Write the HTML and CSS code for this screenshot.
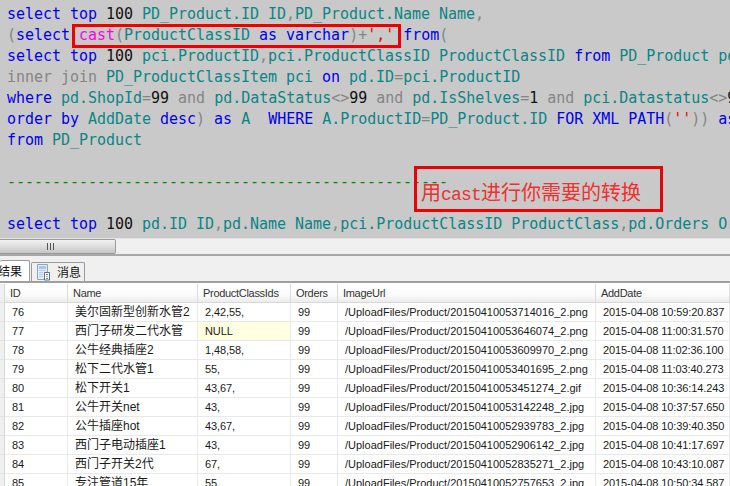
FILE: index.html
```html
<!DOCTYPE html>
<html lang="zh">
<head>
<meta charset="utf-8">
<title>SQL</title>
<link rel="stylesheet" href="styles.css">
</head>
<body>
<div class="app">
  <pre class="editor"><span class="k">select top</span> <span class="n">100</span> <span class="i">PD_Product.ID ID</span><span class="g">,</span><span class="i">PD_Product.Name Name</span><span class="g">,</span>
<span class="g">(</span><span class="k">select</span> <span class="m">cast</span><span class="g">(</span><span class="i">ProductClassID</span> <span class="k">as varchar</span><span class="g">)+</span><span class="s">','</span> <span class="k">from</span><span class="g">(</span>
<span class="k">select top</span> <span class="n">100</span> <span class="i">pci.ProductID</span><span class="g">,</span><span class="i">pci.ProductClassID ProductClassID</span> <span class="k">from</span> <span class="i">PD_Product pd</span>
<span class="g">inner join</span> <span class="i">PD_ProductClassItem pci</span> <span class="k">on</span> <span class="i">pd.ID</span><span class="g">=</span><span class="i">pci.ProductID</span>
<span class="k">where</span> <span class="i">pd.ShopId</span><span class="g">=</span><span class="n">99</span> <span class="g">and</span> <span class="i">pd.DataStatus</span><span class="g">&lt;&gt;</span><span class="n">99</span> <span class="g">and</span> <span class="i">pd.IsShelves</span><span class="g">=</span><span class="n">1</span> <span class="g">and</span> <span class="i">pci.Datastatus</span><span class="g">&lt;&gt;</span><span class="n">99</span>
<span class="k">order by</span> <span class="i">AddDate</span> <span class="k">desc</span><span class="g">)</span> <span class="k">as</span> <span class="i">A</span>  <span class="k">WHERE</span> <span class="i">A.ProductID</span><span class="g">=</span><span class="i">PD_Product.ID</span> <span class="k">FOR XML PATH</span><span class="g">(</span><span class="s">''</span><span class="g">))</span> <span class="k">as</span>
<span class="k">from</span> <span class="i">PD_Product</span>

<span class="c">-------------------------------------------------</span>

<span class="k">select top</span> <span class="n">100</span> <span class="i">pd.ID ID</span><span class="g">,</span><span class="i">pd.Name Name</span><span class="g">,</span><span class="i">pci.ProductClassID ProductClass</span><span class="g">,</span><span class="i">pd.Orders Or</span></pre>
  <div class="mark mark-cast"></div>
  <div class="mark mark-note">用<span class="latin">cast</span>进行你需要的转换</div>

  <div class="hscroll">
    <div class="thumb"><span class="grip"></span><span class="grip"></span><span class="grip"></span></div>
  </div>

  <div class="tabs">
    <div class="tab active"><span class="tab-text cut">结果</span></div>
    <div class="tab">
      <svg class="tab-icon" width="15" height="17" viewBox="0 0 15 17">
        <path d="M1.5.5h10v15h-10z" fill="#e4eefa" stroke="#8fa3bd"/>
        <path d="M3 2h7v3H3z" fill="#a9c6ea"/>
        <path d="M3 6h7v1H3zM3 8h4v1H3zM3 10h4v1H3zM3 12h4v1H3z" fill="#b9cde6"/>
        <path d="M8.5 8.500h5v7.500h-5z" fill="#fff" stroke="#54709c"/>
        <path d="M10 10h2v1h-2z" fill="#d9534a"/>
        <path d="M10 12h2v1h-2z" fill="#e2a93b"/>
        <path d="M10 14h2v1h-2z" fill="#4fa85a"/>
      </svg>
      <span class="tab-text">消息</span>
    </div>
  </div>

  <div class="grid">
    <div class="row head"><div class="hdr"></div><div class="cell">ID</div><div class="cell">Name</div><div class="cell">ProductClassIds</div><div class="cell">Orders</div><div class="cell">ImageUrl</div><div class="cell">AddDate</div></div>
    <div class="row"><div class="hdr"></div><div class="cell">76</div><div class="cell">美尔固新型创新水管2</div><div class="cell">2,42,55,</div><div class="cell">99</div><div class="cell">/UploadFiles/Product/20150410053714016_2.png</div><div class="cell">2015-04-08 10:59:20.837</div></div>
    <div class="row"><div class="hdr"></div><div class="cell">77</div><div class="cell">西门子研发二代水管</div><div class="cell null">NULL</div><div class="cell">99</div><div class="cell">/UploadFiles/Product/20150410053646074_2.png</div><div class="cell">2015-04-08 11:00:31.570</div></div>
    <div class="row"><div class="hdr"></div><div class="cell">78</div><div class="cell">公牛经典插座2</div><div class="cell">1,48,58,</div><div class="cell">99</div><div class="cell">/UploadFiles/Product/20150410053609970_2.png</div><div class="cell">2015-04-08 11:02:36.100</div></div>
    <div class="row"><div class="hdr"></div><div class="cell">79</div><div class="cell">松下二代水管1</div><div class="cell">55,</div><div class="cell">99</div><div class="cell">/UploadFiles/Product/20150410053401695_2.png</div><div class="cell">2015-04-08 11:03:40.273</div></div>
    <div class="row"><div class="hdr"></div><div class="cell">80</div><div class="cell">松下开关1</div><div class="cell">43,67,</div><div class="cell">99</div><div class="cell">/UploadFiles/Product/20150410053451274_2.gif</div><div class="cell">2015-04-08 10:36:14.243</div></div>
    <div class="row"><div class="hdr"></div><div class="cell">81</div><div class="cell">公牛开关net</div><div class="cell">43,</div><div class="cell">99</div><div class="cell">/UploadFiles/Product/20150410053142248_2.jpg</div><div class="cell">2015-04-08 10:37:57.650</div></div>
    <div class="row"><div class="hdr"></div><div class="cell">82</div><div class="cell">公牛插座hot</div><div class="cell">43,67,</div><div class="cell">99</div><div class="cell">/UploadFiles/Product/20150410052939783_2.jpg</div><div class="cell">2015-04-08 10:39:40.350</div></div>
    <div class="row"><div class="hdr"></div><div class="cell">83</div><div class="cell">西门子电动插座1</div><div class="cell">43,</div><div class="cell">99</div><div class="cell">/UploadFiles/Product/20150410052906142_2.jpg</div><div class="cell">2015-04-08 10:41:17.697</div></div>
    <div class="row"><div class="hdr"></div><div class="cell">84</div><div class="cell">西门子开关2代</div><div class="cell">67,</div><div class="cell">99</div><div class="cell">/UploadFiles/Product/20150410052835271_2.jpg</div><div class="cell">2015-04-08 10:43:10.087</div></div>
    <div class="row"><div class="hdr"></div><div class="cell">85</div><div class="cell">专注管道15年</div><div class="cell">55,</div><div class="cell">99</div><div class="cell">/UploadFiles/Product/20150410052757653_2.jpg</div><div class="cell">2015-04-08 10:50:34.587</div></div>
  </div>
</div>
</body>
</html>
```

FILE: styles.css
```css
* { box-sizing: border-box; }
html, body { margin: 0; padding: 0; }
body { width: 730px; height: 486px; overflow: hidden; background: #f0f0f0; }
.app { position: relative; width: 730px; height: 486px; overflow: hidden; display: flex; flex-direction: column; }

.editor {
  margin: 0; flex: none; height: 239px; padding: 4px 0 0 7px; overflow: hidden;
  background: #c9c9c9; border-bottom: 1px solid #e4e4e4;
  font-family: "DejaVu Sans Mono", monospace; font-size: 15px; letter-spacing: -0.03px; line-height: 21px; white-space: pre;
}
.k { color: #0000f0; }
.i { color: #0a8585; }
.g { color: #858585; }
.n { color: #111; }
.m { color: #ff00e6; }
.s { color: #f00000; }
.c { color: #008a00; }

.mark { position: absolute; border: 3px solid #f00000; }
.mark-cast { left: 72px; top: 24px; width: 329px; height: 24px; }
.mark-note {
  left: 414px; top: 166px; width: 249px; height: 46px; padding: 0 0 0 4px; color: #f03030;
  font-family: "Noto Sans CJK SC", sans-serif; font-size: 20px; line-height: 46px; white-space: nowrap;
}
.latin { font-family: "Liberation Mono", monospace; font-size: 18px; letter-spacing: -0.8px; }

.hscroll { flex: none; height: 17px; background: #f0f0f0; border-bottom: 2px solid #a8a8a8; }
.thumb {
  width: 116px; height: 15px; display: flex; gap: 2px; align-items: center; padding-left: 47px;
  background: linear-gradient(#f2f2f2, #dedede 50%, #c4c4c4); border: 1px solid #9a9a9a; border-left: 0; border-radius: 0 2px 2px 0;
}
.grip { width: 1px; height: 7px; background: #555; }

.tabs { flex: none; height: 27px; display: flex; align-items: flex-end; border-bottom: 2px solid #a0a0a0; background: #f0f0f0; }
.tab {
  display: flex; align-items: center; gap: 6px; height: 19px; width: 54px; margin-left: 1px; padding-left: 4px;
  border: 1px solid #9a9a9a; border-bottom: 0; border-radius: 2px 2px 0 0; background: #f0f0f0;
}
.tab.active { width: 30px; height: 21px; margin-left: 0; padding-left: 0; background: #fff; border-left: 0; overflow: hidden; }
.tab-icon { flex: none; }
.tab-text { font-family: "Noto Sans CJK SC", sans-serif; font-size: 12px; line-height: 16px; color: #111; white-space: nowrap; }
.cut { margin-left: -2px; }

.grid { flex: 1; min-height: 0; overflow: hidden; background: #fff; padding-top: 1px; }
.row {
  display: grid; grid-template-columns: 5px 63px 130px 93px 47px 258px 134px;
  height: 19px;
}
.hdr { background: #f0f0f0; border-right: 1px solid #d8d8d8; border-bottom: 1px solid #e2e2e2; }
.cell {
  padding-left: 7px; border-right: 1px solid #e9e9e9; border-bottom: 1px solid #e9e9e9;
  font-family: "Liberation Sans", "Noto Sans CJK SC", sans-serif; font-size: 11px; letter-spacing: -0.1px; line-height: 19px; color: #1a1a1a;
  white-space: nowrap; overflow: hidden;
}
.cell:nth-child(3) { font-size: 12px; letter-spacing: 0; }
.cell:nth-child(6) { letter-spacing: 0; }
.head .cell {
  padding-left: 5px; font-size: 11px; letter-spacing: -0.3px;
  background: linear-gradient(#fff, #fbfbfb 60%, #ececec); border-right-color: #dcdcdc; border-bottom-color: #d8d8d8; color: #333;
}
.null { background: #ffffe1; }
```
